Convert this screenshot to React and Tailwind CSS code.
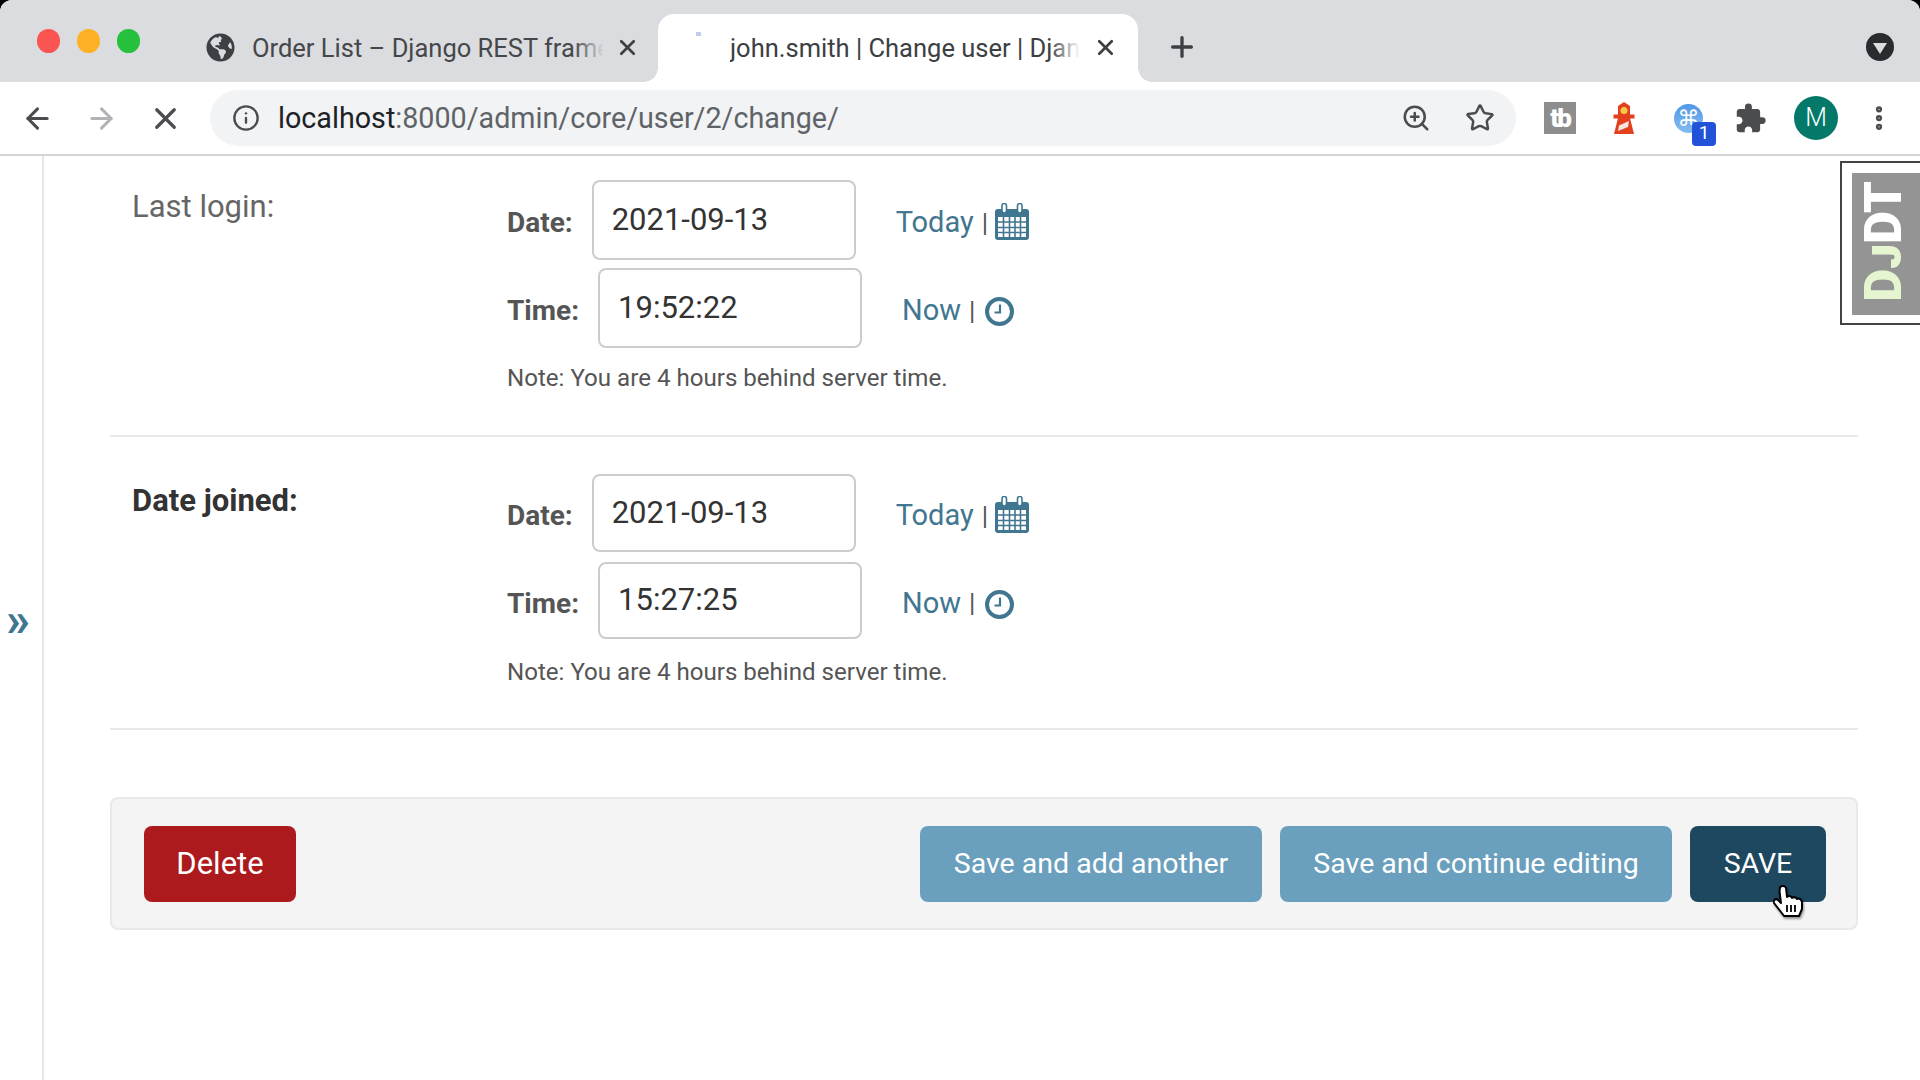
import { ArrowLeft, ArrowRight, X, Plus, Info, ZoomIn, Star, EllipsisVertical } from 'lucide-react';
import { FaGlobeAmericas } from 'react-icons/fa';
import { MdExtension } from 'react-icons/md';

function CalendarIcon() {
  return (
    <svg width="34" height="37" viewBox="0 0 34 37" className="shrink-0 -ml-[3px] -mt-[1px]">
      <path d="M3 6h28a3 3 0 0 1 3 3v25a3 3 0 0 1-3 3H3a3 3 0 0 1-3-3V9a3 3 0 0 1 3-3z" fill="#417690" />
      <rect x="3" y="14" width="28" height="20" fill="#fff" />
      <path d="M3 19h28M3 24.500h28M3 29.500h28M8.500 14v20M14.500 14v20M20 14v20M25.500 14v20" stroke="#417690" strokeWidth="1.600" />
      <rect x="7" y="0.500" width="4.500" height="9.500" rx="2.200" fill="#fff" stroke="#417690" strokeWidth="1.600" />
      <rect x="22.500" y="0.500" width="4.500" height="9.500" rx="2.200" fill="#fff" stroke="#417690" strokeWidth="1.600" />
    </svg>
  );
}

function ClockIcon() {
  return (
    <svg width="29" height="29" viewBox="0 0 29 29" className="shrink-0 mt-[3px]">
      <circle cx="14.500" cy="14.500" r="12.500" fill="#fff" stroke="#417690" strokeWidth="4" />
      <path d="M15 7.500v8H9.500" fill="none" stroke="#417690" strokeWidth="2.200" />
    </svg>
  );
}

function Lighthouse() {
  return (
    <svg width="22" height="32" viewBox="0 0 22 32">
      <path d="M11 0l6 4v10H5V4z" fill="#e2401f" />
      <circle cx="11" cy="8.500" r="3.500" fill="#f7c84a" />
      <rect x="0.500" y="12.500" width="21" height="4" fill="#e2401f" />
      <path d="M5 16h12l4 16H1z" fill="#e2401f" />
      <path d="M6 23.500l10-4.500-1 6-10 4z" fill="#fbe6df" />
    </svg>
  );
}

function HandCursor() {
  return (
    <svg width="31" height="32" viewBox="0 0 31 32" className="drop-shadow-[1px_2px_1px_rgba(0,0,0,0.4)]">
      <path
        d="M7 2.500C8 .5 12 .5 13 3l1 9c2-1.500 4.500-1 5 1 2-1.500 4-1 5 1 2-1 4.500 0 5 3v7l-3 7H11l-3-4-7-9c-1-3 2-5 4-3l3 3-1.500-12z"
        fill="#fff"
        stroke="#000"
        strokeWidth="2"
        strokeLinejoin="round"
      />
      <path d="M14 20v7M18 20v7M22 20v7" stroke="#000" strokeWidth="1.800" />
    </svg>
  );
}

function DateTimeRow({ label, value, link, icon, rowClass }) {
  return (
    <div className={`flex items-center ${rowClass}`}>
      <span className="font-bold text-[#555] text-[28px] mr-[19px] pt-[6px]">{label}</span>
      <input
        readOnly
        value={value}
        className="w-[264px] h-full border-2 border-[#ccc] rounded-lg pl-[18px] pb-[2px] text-[31px] text-[#333] outline-none bg-white"
      />
      <a className="text-[#417690] text-[29px] ml-[40px] pt-[6px]">{link}</a>
      <span className="text-[#555] text-[26px] ml-2 mr-[10px] pt-[6px]">|</span>
      <span className="pt-1 flex">{icon}</span>
    </div>
  );
}

function DateTimeField({ title, titleClass, date, time, sectionClass, dateRow, timeRow, noteClass }) {
  return (
    <div className={`flex border-b-2 border-[#e9e9e9] pl-[22px] ${sectionClass}`}>
      <div className={`w-[375px] text-[31px] leading-[40px] ${titleClass}`}>{title}</div>
      <div className="flex flex-col">
        <DateTimeRow label="Date:" value={date} link="Today" icon={<CalendarIcon />} rowClass={dateRow} />
        <DateTimeRow label="Time:" value={time} link="Now" icon={<ClockIcon />} rowClass={timeRow} />
        <p className={`text-[#555] text-[24.100px] leading-[36px] ${noteClass}`}>Note: You are 4 hours behind server time.</p>
      </div>
    </div>
  );
}

export default function App() {
  return (
    <div className="h-screen bg-black overflow-hidden font-['Roboto',sans-serif]">
      <div className="relative h-full flex flex-col bg-white rounded-t-[12px] overflow-hidden">
        {/* Tab strip */}
        <div className="h-[82px] shrink-0 bg-[#dadce0] flex items-end">
          <div className="flex gap-[17px] pl-[37px] w-[206px] self-start pt-[29px]">
            <span className="w-[23px] h-[24px] rounded-full bg-[#fb5552]" />
            <span className="w-[23px] h-[24px] rounded-full bg-[#fdb226]" />
            <span className="w-[23px] h-[24px] rounded-full bg-[#25c03c]" />
          </div>
          <div className="w-[452px] h-[68px] flex items-center pb-[2px] relative">
            <FaGlobeAmericas className="text-[#3c4043] text-[29px] shrink-0" />
            <div className="relative w-[352px] ml-[17px] pt-[2px] overflow-hidden whitespace-nowrap text-[25.500px] text-[#45474a]">
              Order List – Django REST framework
              <span className="absolute right-0 top-0 h-full w-[30px] bg-gradient-to-r from-transparent to-[#dadce0]" />
            </div>
            <X className="ml-[11px] text-[#3c4043]" size={25} strokeWidth={2.500} />
          </div>
          <div className="relative w-[480px] h-[68px] bg-white rounded-t-[16px] flex items-center pb-[2px]">
            <span className="absolute -left-[14px] bottom-0 w-[14px] h-[14px] bg-[radial-gradient(circle_at_0_0,#dadce0_13.500px,#fff_14px)]" />
            <span className="absolute -right-[14px] bottom-0 w-[14px] h-[14px] bg-[radial-gradient(circle_at_100%_0,#dadce0_13.500px,#fff_14px)]" />
            <span className="absolute left-[38px] top-[18px] w-[5px] h-[4px] bg-[#c3cbec]" />
            <div className="relative w-[350px] ml-[72px] pt-[2px] overflow-hidden whitespace-nowrap text-[25.500px] text-[#3c4043]">
              john.smith | Change user | Django site admin
              <span className="absolute right-0 top-0 h-full w-[30px] bg-gradient-to-r from-transparent to-white" />
            </div>
            <X className="ml-[13px] text-[#3c4043]" size={25} strokeWidth={2.500} />
          </div>
          <div className="flex-1 h-[68px] flex items-center pb-[2px] pl-[28px]">
            <Plus className="text-[#3c4043]" size={32} strokeWidth={2.500} />
            <div className="ml-auto mr-[26px] w-[28px] h-[28px] rounded-full bg-[#292b2f] flex items-center justify-center">
              <span className="w-0 h-0 border-l-[7px] border-r-[7px] border-t-[11px] border-l-transparent border-r-transparent border-t-[#dadce0] mt-[3px]" />
            </div>
          </div>
        </div>

        {/* Toolbar */}
        <div className="h-[74px] shrink-0 bg-white border-b-2 border-[#d5d5d8] flex items-center pl-[21px] pr-[24px]">
          <ArrowLeft className="text-[#4a4c50]" size={33} strokeWidth={2.200} />
          <ArrowRight className="text-[#b1b3b6] ml-[31px]" size={33} strokeWidth={2.200} />
          <X className="text-[#4a4c50] ml-[30px]" size={35} strokeWidth={2.200} />
          <div className="w-[1306px] h-[56px] ml-[27px] rounded-full bg-[#f1f3f4] flex items-center pl-[22px] pr-[21px]">
            <Info className="text-[#4a4c50]" size={28} strokeWidth={2} />
            <span className="text-[28.700px] ml-[18px] pt-[2px] text-[#5f6368]">
              <span className="text-[#202124]">localhost</span>:8000/admin/core/user/2/change/
            </span>
            <ZoomIn className="ml-auto text-[#4a4c50]" size={30} strokeWidth={2} />
            <Star className="ml-[34px] text-[#4a4c50]" size={30} strokeWidth={2} />
          </div>
          <div className="w-[32px] h-[32px] ml-[28px] bg-[#8d8d8d] flex items-center justify-center text-white font-black text-[26px] leading-none tracking-[-2px]">
            tb
          </div>
          <div className="ml-[37px] flex">
            <Lighthouse />
          </div>
          <div className="relative w-[29px] h-[29px] ml-[39px] rounded-full bg-gradient-to-b from-[#4f97e6] to-[#86bdf0] flex items-center justify-center text-white text-[22px] font-['DejaVu_Sans',sans-serif]">
            ⌘
            <span className="absolute left-[18px] top-[18px] w-[24px] h-[24px] rounded-[4px] bg-[#2152d8] flex items-center justify-center text-white text-[19px] font-['Roboto',sans-serif]">
              1
            </span>
          </div>
          <MdExtension className="text-[#4a4c50] text-[33px] ml-[31px]" />
          <div className="w-[44px] h-[44px] ml-[27px] rounded-full bg-[#04796a] flex items-center justify-center text-white text-[25px] font-light">
            M
          </div>
          <EllipsisVertical className="ml-[26px] text-[#4a4c50]" size={30} strokeWidth={3} />
        </div>

        {/* Page */}
        <div className="flex-1 flex min-h-0">
          <div className="w-[44px] shrink-0 border-r-2 border-[#e6e6e6] flex items-center pl-[6px] pt-[3px]">
            <span className="text-[#417690] text-[48px] font-bold leading-none">»</span>
          </div>
          <div className="flex-1 pl-[66px] pr-[62px]">
            <DateTimeField
              title="Last login:"
              titleClass="text-[#666] pt-[7px]"
              date="2021-09-13"
              time="19:52:22"
              sectionClass="pt-[24px] h-[281px]"
              dateRow="h-[80px] mb-[8px]"
              timeRow="h-[80px]"
              noteClass="mt-[12px]"
            />
            <DateTimeField
              title="Date joined:"
              titleClass="text-[#333] font-bold pt-[7px]"
              date="2021-09-13"
              time="15:27:25"
              sectionClass="pt-[37px] h-[293px]"
              dateRow="h-[78px] mb-[10px]"
              timeRow="h-[77px]"
              noteClass="mt-[15px]"
            />
            <div className="mt-[67px] h-[133px] bg-[#f4f4f5] border-2 border-[#e9e9e9] rounded-lg flex items-center gap-[18px] pl-[32px] pr-[30px] text-[28.500px] text-white">
              <button className="w-[152px] h-[76px] pt-[2px] rounded-lg bg-[#ad1a1d] mr-auto text-[31px]">Delete</button>
              <button className="w-[342px] h-[76px] pt-[2px] rounded-lg bg-[#6aa0bd]">Save and add another</button>
              <button className="w-[392px] h-[76px] pt-[2px] rounded-lg bg-[#6aa0bd]">Save and continue editing</button>
              <button className="w-[136px] h-[76px] pt-[2px] rounded-lg bg-[#1d4860]">SAVE</button>
            </div>
          </div>
        </div>

        {/* Debug toolbar handle */}
        <div className="absolute right-0 top-[161px] w-[80px] h-[164px] border-2 border-r-0 border-[#444] bg-white pl-[10px] pt-[10px] pb-[8px]">
          <div className="h-full bg-[#949494] flex items-center justify-center pr-[6px] pb-[6px]">
            <span className="[writing-mode:vertical-rl] rotate-180 font-black text-[51px] leading-none text-white [font-variant:small-caps]">
              <span className="text-[#e5f5d0]">Dj</span>DT
            </span>
          </div>
        </div>

        {/* Mouse pointer */}
        <div className="absolute left-[1773px] top-[885px]">
          <HandCursor />
        </div>
      </div>
    </div>
  );
}
